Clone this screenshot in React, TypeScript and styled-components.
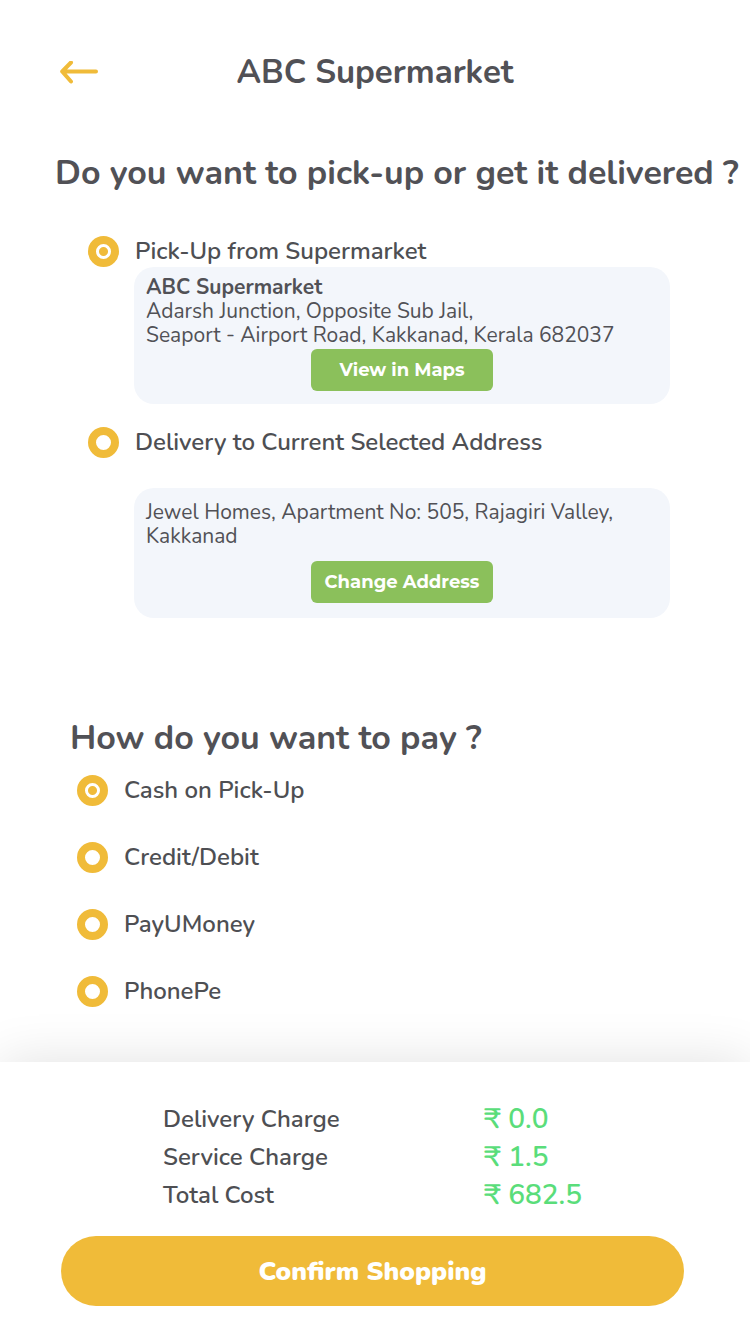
import React, { useState } from "react";
import styled, { createGlobalStyle } from "styled-components";

const amber = "#f0bb39";
const ink = "#515156";

const GlobalStyle = createGlobalStyle`
  *, *::before, *::after { box-sizing: border-box; }
  body {
    margin: 0;
    background: #fff;
    color: ${ink};
    font-family: Nunito, "Open Sans", "Noto Sans", sans-serif;
  }
  button { font-family: inherit; border: 0; cursor: pointer; }
  h1, h2, p, dl, dd, fieldset { margin: 0; padding: 0; border: 0; }
`;

const Page = styled.div`
  display: flex;
  flex-direction: column;
  min-height: 100vh;
`;

const Header = styled.header`
  display: grid;
  grid-template-columns: 1fr auto 1fr;
  align-items: center;
  padding: 49px 60px 0;
`;

const BackButton = styled.button`
  display: flex;
  justify-self: start;
  padding: 0;
  background: none;
`;

const Title = styled.h1`
  font-size: 33px;
  line-height: 48px;
  font-weight: 700;
`;

const Main = styled.main`
  flex: 1;
  padding-bottom: 55px;
`;

const DeliveryQuestion = styled.h2`
  padding: 52px 0 0 55px;
  font-size: 34px;
  line-height: 48px;
  font-weight: 700;
`;

const PaymentQuestion = styled(DeliveryQuestion)`
  padding: 96px 0 0 70px;
`;

const DeliveryOptions = styled.fieldset`
  padding: 39px 80px 0 88px;
`;

const PaymentOptions = styled.fieldset`
  display: flex;
  flex-direction: column;
  align-items: flex-start;
  gap: 36px;
  padding: 13px 77px 0;
`;

const Option = styled.label`
  display: flex;
  align-items: center;
  gap: 16px;
  color: #4e4f53;
  font-size: 24px;
  line-height: 31px;
  font-weight: 600;
  cursor: pointer;
`;

const Radio = styled.input`
  appearance: none;
  flex: none;
  width: 31px;
  height: 31px;
  margin: 0;
  border-radius: 50%;
  background: #fff;
  border: 8px solid ${amber};
  cursor: pointer;

  &:checked {
    background: radial-gradient(circle, ${amber} 4px, #fff 5px);
  }
`;

const AddressCard = styled.section<{ $roomy?: boolean }>`
  display: flex;
  flex-direction: column;
  margin: ${(p) => (p.$roomy ? "30px 0 0 46px" : "0 0 23px 46px")};
  padding: ${(p) => (p.$roomy ? "12px 12px 15px" : "8px 12px 13px")};
  gap: ${(p) => (p.$roomy ? 13 : 2)}px;
  border-radius: 20px;
  background: #f3f6fb;
`;

const Address = styled.p`
  font-size: 21px;
  line-height: 24px;
`;

const CardButton = styled.button`
  align-self: center;
  width: 182px;
  height: 42px;
  padding: 0;
  border-radius: 6px;
  background: #8bc05b;
  color: #fff;
  && { font-family: Montserrat, "Open Sans", sans-serif; }
  font-size: 18px;
  font-weight: 700;
  white-space: nowrap;
`;

const Footer = styled.footer`
  padding: 38px 66px 28px 61px;
  background: #fff;
  box-shadow: 0 0 50px rgba(0, 0, 0, 0.12);
`;

const Charges = styled.dl`
  display: grid;
  grid-template-columns: 321px auto;
  grid-auto-rows: 38px;
  align-items: center;
  padding-left: 102px;
`;

const ChargeName = styled.dt`
  color: #4e4f53;
  font-size: 24px;
  font-weight: 600;
`;

const ChargeValue = styled.dd`
  color: #5add7a;
  font-size: 28px;
  line-height: 38px;
  font-weight: 600;
`;

const ConfirmButton = styled.button`
  width: 100%;
  height: 70px;
  margin-top: 22px;
  border-radius: 35px;
  background: ${amber};
  color: #fff;
  font-size: 26px;
  font-weight: 900;
`;

const payments = ["Cash on Pick-Up", "Credit/Debit", "PayUMoney", "PhonePe"];

const charges = [
  { name: "Delivery Charge", value: "₹ 0.0" },
  { name: "Service Charge", value: "₹ 1.5" },
  { name: "Total Cost", value: "₹ 682.5" },
];

export default function App() {
  const [method, setMethod] = useState("pickup");
  const [payment, setPayment] = useState(payments[0]);

  return (
    <Page>
      <GlobalStyle />
      <Header>
        <BackButton type="button" aria-label="Back">
          <svg width="38" height="24" viewBox="0 0 38 24" fill="none" stroke={amber} strokeWidth="4" strokeLinecap="round" strokeLinejoin="round">
            <path d="M36 10.5H3M11 1.5L2.2 10.5L11 20.5" />
          </svg>
        </BackButton>
        <Title>ABC Supermarket</Title>
      </Header>
      <Main>
        <DeliveryQuestion id="method">Do you want to pick-up or get it delivered ?</DeliveryQuestion>
        <DeliveryOptions aria-labelledby="method">
          <Option>
            <Radio type="radio" name="method" checked={method === "pickup"} onChange={() => setMethod("pickup")} />
            Pick-Up from Supermarket
          </Option>
          <AddressCard>
            <Address>
              <b>ABC Supermarket</b>
              <br />
              Adarsh Junction, Opposite Sub Jail,
              <br />
              Seaport - Airport Road, Kakkanad, Kerala 682037
            </Address>
            <CardButton type="button">View in Maps</CardButton>
          </AddressCard>
          <Option>
            <Radio type="radio" name="method" checked={method === "delivery"} onChange={() => setMethod("delivery")} />
            Delivery to Current Selected Address
          </Option>
          <AddressCard $roomy>
            <Address>
              Jewel Homes, Apartment No: 505, Rajagiri Valley,
              <br />
              Kakkanad
            </Address>
            <CardButton type="button">Change Address</CardButton>
          </AddressCard>
        </DeliveryOptions>
        <PaymentQuestion id="payment">How do you want to pay ?</PaymentQuestion>
        <PaymentOptions aria-labelledby="payment">
          {payments.map((name) => (
            <Option key={name}>
              <Radio type="radio" name="payment" checked={payment === name} onChange={() => setPayment(name)} />
              {name}
            </Option>
          ))}
        </PaymentOptions>
      </Main>
      <Footer>
        <Charges>
          {charges.map(({ name, value }) => (
            <React.Fragment key={name}>
              <ChargeName>{name}</ChargeName>
              <ChargeValue>{value}</ChargeValue>
            </React.Fragment>
          ))}
        </Charges>
        <ConfirmButton type="button">Confirm Shopping</ConfirmButton>
      </Footer>
    </Page>
  );
}
